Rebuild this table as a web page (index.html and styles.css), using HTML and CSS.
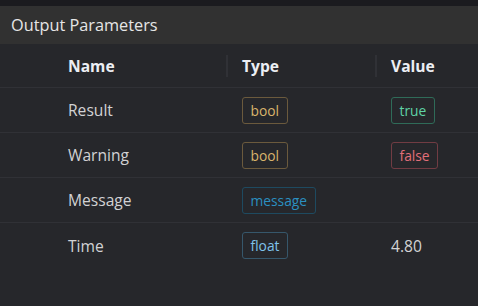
FILE: index.html
```html
<!DOCTYPE html>
<html lang="en">
<head>
  <meta charset="UTF-8">
  <meta name="viewport" content="width=device-width, initial-scale=1.0">
  <link rel="stylesheet" href="styles.css">
</head>
<body>

  <div class="panel">
    <div class="panel-title">Output Parameters</div>

    <div class="params">
      <div class="row head">
        <div></div>
        <div class="cell">Name</div>
        <div class="cell sep">Type</div>
        <div class="cell sep">Value</div>
      </div>

      <div class="row">
        <div></div>
        <div class="cell">Result</div>
        <div class="cell"><span class="tag tag-bool">bool</span></div>
        <div class="cell"><span class="tag tag-true">true</span></div>
      </div>

      <div class="row">
        <div></div>
        <div class="cell">Warning</div>
        <div class="cell"><span class="tag tag-bool">bool</span></div>
        <div class="cell"><span class="tag tag-false">false</span></div>
      </div>

      <div class="row">
        <div></div>
        <div class="cell">Message</div>
        <div class="cell"><span class="tag tag-message">message</span></div>
        <div class="cell"></div>
      </div>

      <div class="row last">
        <div></div>
        <div class="cell">Time</div>
        <div class="cell"><span class="tag tag-float">float</span></div>
        <div class="cell">4.80</div>
      </div>
    </div>
  </div>

</body>
</html>
```

FILE: styles.css
```css
* {
  margin: 0;
  padding: 0;
  box-sizing: border-box;
}

body {
  background-color: #1b1b1f;
  font-family: "Open Sans", "Noto Sans", sans-serif;
  color: #d2d2d4;
  height: 100vh;
  overflow: hidden;
}

.panel {
  margin-top: 6px;
  height: calc(100vh - 6px);
  display: flex;
  flex-direction: column;
}

.panel-title {
  height: 38px;
  background-color: #313131;
  color: #e6e6e6;
  font-size: 16.3px;
  padding-left: 11px;
  display: flex;
  align-items: center;
}

.params {
  flex: 1;
  background-color: #26272b;
}

.row {
  display: grid;
  grid-template-columns: 52px 174px 149px 1fr;
  height: 45px;
  border-bottom: 1px solid #303136;
  font-size: 15.6px;
}
.row.head {
  height: 44px;
  font-weight: bold;
  color: #eceef3;
}
.row.last {
  border-bottom: none;
}

.cell {
  display: flex;
  align-items: center;
  padding-left: 16px;
}

/* short divider in front of the header labels */
.cell.sep {
  padding-left: 0;
}
.cell.sep::before {
  content: "";
  width: 2px;
  height: 22px;
  background-color: #303136;
  margin-right: 14px;
}

.tag {
  display: inline-block;
  font-size: 13.8px;
  line-height: 17px;
  padding: 4px 7.5px;
  border: 1px solid;
  border-radius: 3px;
}
.tag-bool {
  color: #d9b46c;
  border-color: #6b5a3d;
}
.tag-true {
  color: #5fd3a6;
  border-color: #2f6b58;
}
.tag-false {
  color: #e26f79;
  border-color: #713c43;
}
.tag-message {
  color: #2b90c0;
  border-color: #1e4a60;
}
.tag-float {
  color: #7fc2ea;
  border-color: #36576b;
}
```
